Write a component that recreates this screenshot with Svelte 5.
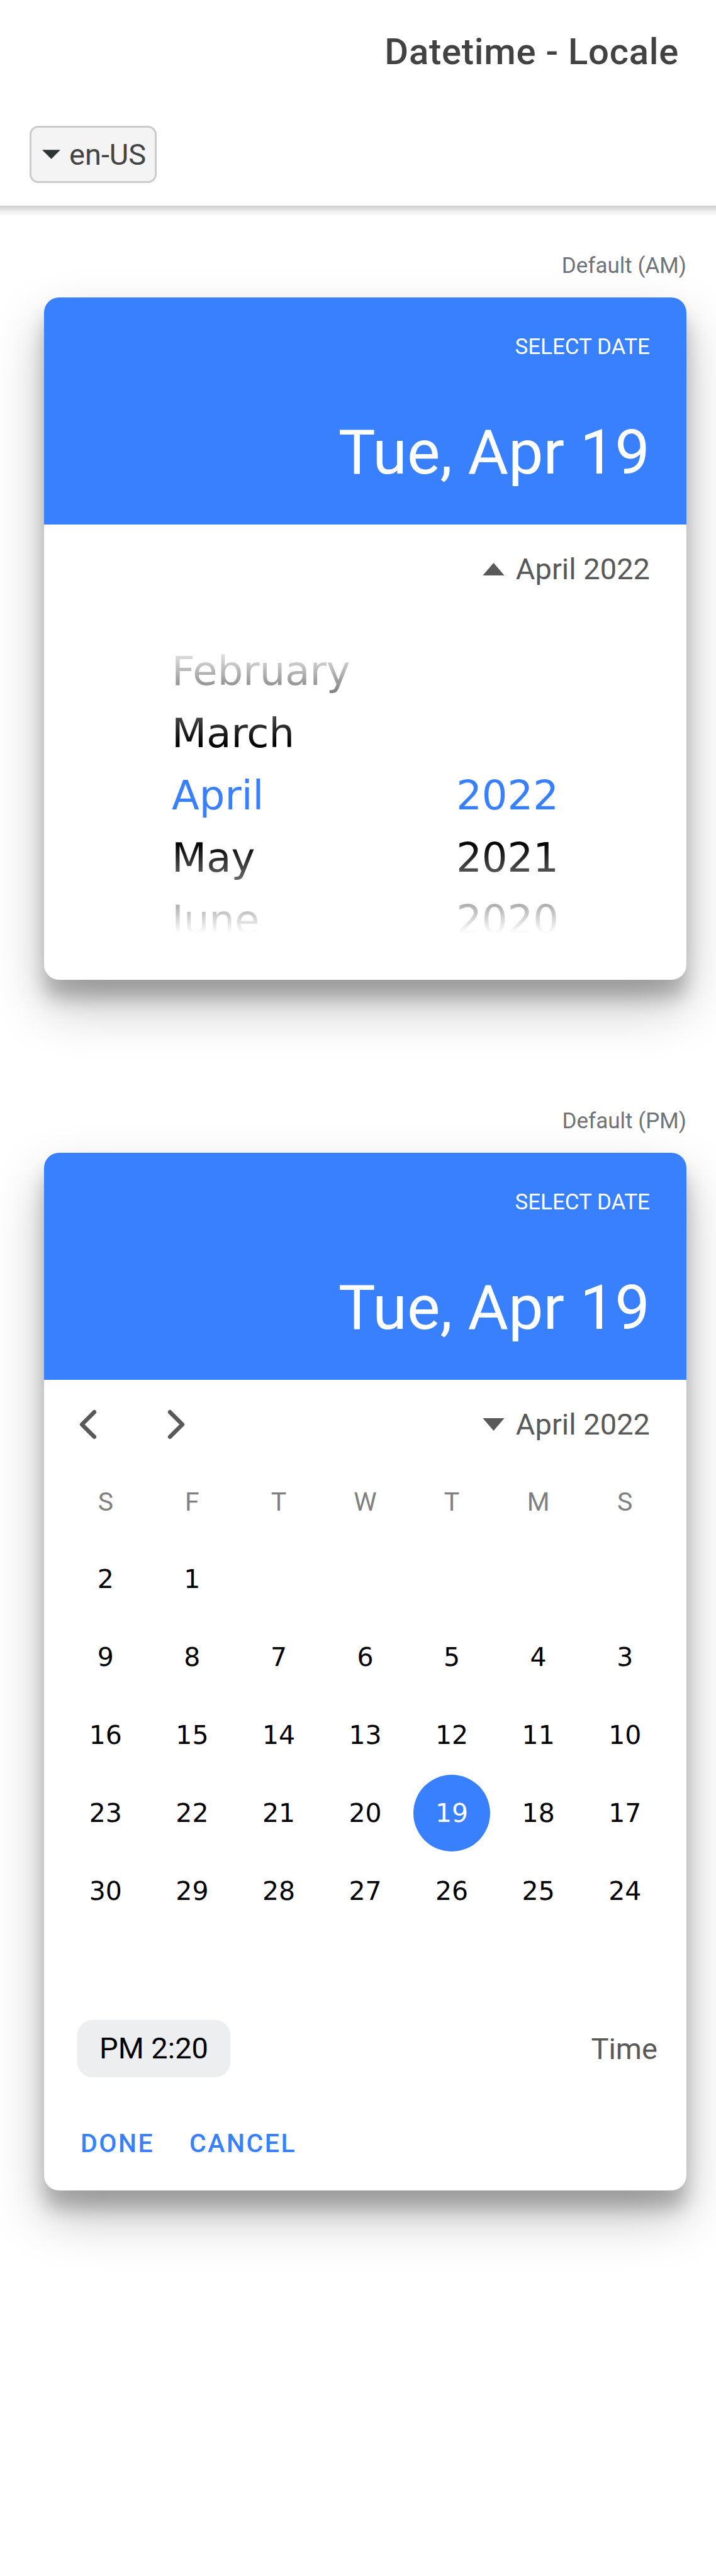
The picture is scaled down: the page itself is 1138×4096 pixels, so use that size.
<script>
  const weekdays = ['S', 'M', 'T', 'W', 'T', 'F', 'S'];
  const months = ['February', 'March', 'April', 'May', 'June'];
  const years = ['', '', '2022', '2021', '2020'];
  const firstWeekday = 5;
  const dayCount = 30;

  let month = $state('April');
  let year = $state('2022');
  let selectedDay = $state(19);

  // The calendar always reserves six weeks, so its height never changes.
  const weeks = Array.from({ length: 6 }, (_, week) =>
    Array.from({ length: 7 }, (_, i) => {
      const day = week * 7 + i - firstWeekday + 1;
      return day >= 1 && day <= dayCount ? day : null;
    })
  );
</script>

{#snippet cardHeader()}
  <header class="card-header">
    <div class="prompt">SELECT DATE</div>
    <div class="chosen">Tue, Apr 19</div>
  </header>
{/snippet}

<div class="page">
  <header class="toolbar">
    <h1>Datetime - Locale</h1>
    <div class="locale">
      <svg class="locale-caret" viewBox="0 0 30 15" aria-hidden="true"><path d="M0 0h30L15 15z" /></svg>
      <select aria-label="Locale">
        <option>en-US</option>
      </select>
    </div>
  </header>

  <main>
    <section>
      <h2>Default (AM)</h2>
      <div class="card">
        {@render cardHeader()}
        <div class="month-bar">
          <button class="month-toggle" aria-expanded="true">
            <svg class="caret" viewBox="0 0 36 21" aria-hidden="true"><path d="M0 21h36L18 0z" /></svg>
            April 2022
          </button>
        </div>
        <div class="wheel">
          <div class="wheel-column">
            {#each months as item}
              <button class:active={item === month} onclick={() => (month = item)}>{item}</button>
            {/each}
          </div>
          <div class="wheel-column">
            {#each years as item}
              {#if item}
                <button class:active={item === year} onclick={() => (year = item)}>{item}</button>
              {:else}
                <span class="wheel-gap"></span>
              {/if}
            {/each}
          </div>
        </div>
      </div>
    </section>

    <section>
      <h2>Default (PM)</h2>
      <div class="card">
        {@render cardHeader()}
        <div class="month-bar">
          <div class="arrows">
            <button aria-label="Next month">
              <svg viewBox="0 0 512 512" aria-hidden="true"><path d="M328 112L184 256l144 144" /></svg>
            </button>
            <button aria-label="Previous month">
              <svg viewBox="0 0 512 512" aria-hidden="true"><path d="M184 112l144 144-144 144" /></svg>
            </button>
          </div>
          <button class="month-toggle" aria-expanded="false">
            <svg class="caret" viewBox="0 0 36 21" aria-hidden="true"><path d="M0 0h36L18 21z" /></svg>
            April 2022
          </button>
        </div>
        <div class="calendar">
          <table dir="rtl">
            <thead>
              <tr>
                {#each weekdays as name}<th scope="col">{name}</th>{/each}
              </tr>
            </thead>
            <tbody>
              {#each weeks as week}
                <tr>
                  {#each week as day}
                    <td>
                      {#if day}
                        <button class="day" class:selected={day === selectedDay} onclick={() => (selectedDay = day)}>{day}</button>
                      {/if}
                    </td>
                  {/each}
                </tr>
              {/each}
            </tbody>
          </table>
        </div>
        <div class="time-row">
          <button class="time" aria-labelledby="time-label time-value"><span id="time-value">PM 2:20</span></button>
          <span id="time-label">Time</span>
        </div>
        <footer class="actions">
          <button>DONE</button>
          <button>CANCEL</button>
        </footer>
      </div>
    </section>
  </main>
</div>

<style>
  :global(body) {
    background: #fff;
  }

  .page {
    min-height: 100vh;
    box-sizing: border-box;
    overflow: hidden;
    font-family: Roboto, 'Liberation Sans', sans-serif;
    color: #000;
  }

  button,
  select {
    margin: 0;
    padding: 0;
    border: 0;
    background: none;
    color: inherit;
    font: inherit;
    letter-spacing: inherit;
    cursor: pointer;
  }

  svg {
    display: block;
    flex: none;
  }

  .toolbar {
    position: relative;
    display: flex;
    flex-direction: column;
    padding: 0 47px 36px;
    background: #fff;
  }

  .toolbar::after {
    content: '';
    position: absolute;
    top: 100%;
    left: 0;
    right: 0;
    height: 15px;
    background: linear-gradient(#cdcdcd, #dcdcdc 30%, #f1f1f1 65%, #fafafa);
  }

  h1 {
    margin: 0;
    padding: 48px 12px;
    text-align: right;
    font-size: 58px;
    font-weight: 500;
    line-height: 68px;
    letter-spacing: 0.0125em;
    color: #424242;
  }

  .locale {
    align-self: flex-start;
    display: flex;
    align-items: center;
    gap: 14px;
    margin-top: 36px;
    padding: 0 13px 0 17px;
    border: 3px solid #cbcbcb;
    border-radius: 14px;
    background: #f4f4f4;
    color: #444;
    font-size: 47px;
    line-height: 85px;
  }

  .locale select {
    appearance: none;
    height: 85px;
  }

  .locale-caret {
    width: 29px;
    height: 15px;
    fill: #2d3436;
  }

  main {
    display: flex;
    flex-direction: column;
    gap: 204px;
    padding: 75px 47px 180px 70px;
  }

  h2 {
    margin: 0 0 29px;
    text-align: right;
    font-size: 35px;
    font-weight: 400;
    line-height: 42px;
    color: #6f7378;
  }

  .card {
    overflow: hidden;
    border-radius: 24px;
    background: #fff;
    box-shadow:
      0 41px 82px rgba(0, 0, 0, 0.25),
      0 29px 29px rgba(0, 0, 0, 0.22);
  }

  .card-header {
    display: flex;
    flex-direction: column;
    gap: 88px;
    padding: 58px 58px 57px;
    background: #3880ff;
    color: #fff;
    text-align: right;
  }

  .prompt {
    font-size: 35px;
    line-height: 42px;
  }

  .chosen {
    font-size: 99px;
    line-height: 116px;
  }

  .month-bar {
    display: flex;
    align-items: center;
    height: 142px;
    padding-right: 58px;
    color: #595959;
  }

  .month-toggle {
    display: flex;
    align-items: center;
    gap: 18px;
    margin-left: auto;
    font-size: 47px;
    line-height: 56px;
  }

  .caret {
    width: 35px;
    height: 20px;
    fill: currentColor;
  }

  .arrows {
    display: flex;
  }

  .arrows button {
    padding: 35px;
  }

  .arrows svg {
    width: 70px;
    height: 70px;
    fill: none;
    stroke: currentColor;
    stroke-width: 48;
    stroke-linecap: round;
    stroke-linejoin: round;
  }

  .wheel {
    display: flex;
    justify-content: space-between;
    margin: 42px 0 45px;
    padding: 0 203px;
    font-family: 'DejaVu Sans', sans-serif;
    font-size: 64px;
    line-height: 99px;
    -webkit-mask-image: linear-gradient(transparent 3px, #000 166px, #000 322px, transparent 466px);
    mask-image: linear-gradient(transparent 3px, #000 166px, #000 322px, transparent 466px);
  }

  .wheel-column {
    display: flex;
    flex-direction: column;
    align-items: flex-start;
  }

  .wheel-column button,
  .wheel-gap {
    height: 99px;
  }

  .wheel-column .active {
    color: #3880ff;
  }

  .calendar {
    padding: 28px 29px 0;
  }

  table {
    width: 100%;
    table-layout: fixed;
    border-collapse: collapse;
  }

  th {
    padding: 0 0 37px;
    font-size: 41px;
    font-weight: 400;
    line-height: 48px;
    color: #808080;
  }

  td {
    height: 124px;
    padding: 0;
    text-align: center;
    vertical-align: middle;
  }

  .day {
    display: block;
    width: 122px;
    height: 122px;
    margin: 0 auto;
    border-radius: 50%;
    font-family: 'DejaVu Sans', sans-serif;
    font-size: 41px;
    line-height: 122px;
  }

  .day.selected {
    background: #3880ff;
    color: #fff;
  }

  .time-row {
    display: flex;
    align-items: center;
    justify-content: space-between;
    padding: 19px 46px 0 53px;
    font-size: 47px;
    line-height: 56px;
    color: #595959;
  }

  .time {
    padding: 17px 35px 18px;
    border-radius: 24px;
    background: #edeef0;
    color: #000;
  }

  .actions {
    display: flex;
    gap: 56px;
    padding: 81px 58px 51px;
    color: #3880ff;
    font-size: 41px;
    font-weight: 500;
    line-height: 48px;
    letter-spacing: 0.06em;
  }
</style>
